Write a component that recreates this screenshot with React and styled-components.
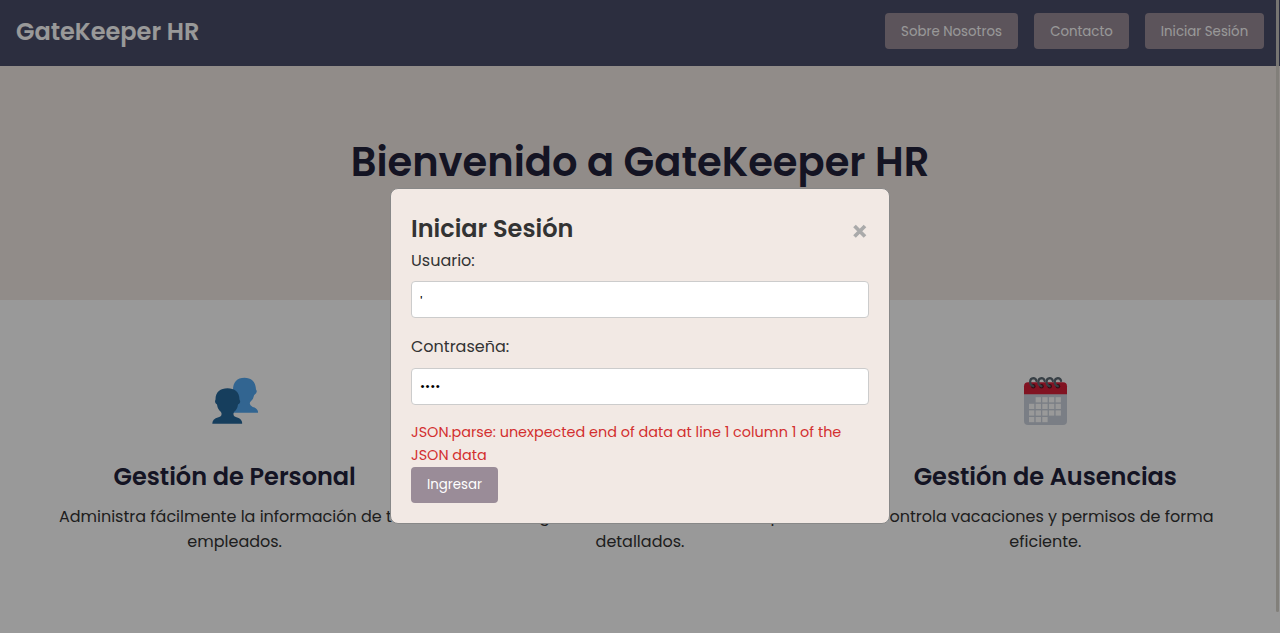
import React from "react";
import styled, { createGlobalStyle } from "styled-components";

const GlobalStyle = createGlobalStyle`
  * { box-sizing: border-box; margin: 0; padding: 0; }
  body {
    font-family: Poppins, Inter, "Open Sans", sans-serif;
    font-size: 16px;
    line-height: 1.6;
    color: #333;
    background: #fff;
    height: 633px;
    overflow: hidden;
  }
`;

const Header = styled.header`
  display: flex;
  justify-content: space-between;
  align-items: flex-start;
  height: 66px;
  padding: 13px 16px 0;
  background: #4a4e69;
  color: #fff;
`;

const Logo = styled.div`
  font-size: 24px;
  font-weight: 600;
  line-height: 38px;
`;

const Nav = styled.nav`
  display: flex;
  gap: 16px;
`;

const Button = styled.button`
  width: ${(p) => p.$width}px;
  height: 36px;
  padding-top: 1px;
  border: 0;
  border-radius: 4px;
  background: #9a8c98;
  color: #fff;
  font-family: inherit;
  font-size: 13.333px;
  white-space: nowrap;
`;

const SubmitButton = styled(Button)`
  padding: 0 0 1px;
`;

const Hero = styled.section`
  height: 234px;
  padding-top: 64px;
  background: #f2e9e4;
  text-align: center;
`;

const HeroTitle = styled.h1`
  font-size: 40px;
  font-weight: 600;
  color: #22223b;
`;

const Features = styled.section`
  display: grid;
  grid-template-columns: repeat(3, 1fr);
  padding: 64px 32px;
`;

const Feature = styled.article`
  display: flex;
  flex-direction: column;
  align-items: center;
  text-align: center;
`;

const FeatureIcon = styled.svg`
  width: 52px;
  height: 52px;
  margin: 11px 0 31px;
`;

const FeatureTitle = styled.h3`
  font-size: 24px;
  font-weight: 600;
  line-height: 38px;
  color: #22223b;
  margin-bottom: 8px;
`;

const FeatureLine = styled.span`
  display: block;
  line-height: 25px;
  white-space: nowrap;
  letter-spacing: ${(p) => p.$track || 0}px;
`;

const Overlay = styled.div`
  position: fixed;
  inset: 0;
  display: flex;
  justify-content: center;
  align-items: flex-start;
  padding-top: 188px;
  background: rgba(0, 0, 0, 0.4);
`;

const Dialog = styled.div`
  width: 500px;
  height: 336px;
  padding: 20px;
  border: 1px solid #888;
  border-radius: 8px;
  background: #f2e9e4;
`;

const DialogHead = styled.div`
  display: flex;
  justify-content: space-between;
  align-items: center;
  height: 39px;
`;

const DialogTitle = styled.h2`
  font-size: 24px;
  font-weight: 600;
  line-height: 39px;
`;

const Close = styled.svg`
  width: 14px;
  height: 14px;
  margin: 4px 2px 0 0;
`;

const Label = styled.label`
  display: block;
  height: 25px;
  line-height: 25px;
  margin-bottom: 8px;
`;

const Input = styled.input`
  display: block;
  width: 100%;
  height: 37px;
  margin-bottom: 16px;
  padding: 2px 8px 0;
  border: 1px solid #ccc;
  border-radius: 4px;
  background: #fff;
  color: #000;
  font-family: "Liberation Sans", sans-serif;
  font-size: 13.333px;
`;

const PasswordInput = styled(Input)`
  margin-top: 9px;
  padding-top: 1px;
  font-family: inherit;
  font-size: 12.3px;
`;

const ErrorLine = styled.span`
  display: block;
  font-size: 14.4px;
  line-height: 23px;
  color: #d32f2f;
  white-space: nowrap;
`;

const ScrollThumb = styled.div`
  position: fixed;
  top: 0;
  right: 1px;
  width: 3px;
  height: 612px;
  background: rgba(127, 125, 120, 0.9);
  border-radius: 0 0 2px 2px;
`;

function PeopleIcon() {
  return (
    <FeatureIcon viewBox="0 0 52 52">
      <path fill="#54a9f2" d="M24 37.700 L49 37.700 Q49.500 33.500 43.700 32 Q39.700 30 41.200 27 Q44.700 24 45.200 20 Q49.200 17.500 47 14.500 C46.500 6 42 2.700 35.500 2.700 C28 2.700 24 7 24 15 Z" />
      <path fill="#26689c" d="M3.300 48.800 Q3 44 9.500 42.200 Q14 41 12 37 Q8.500 34 8 29.500 Q5 27.500 6.500 24.500 C6.500 17 11.500 13.300 18.500 13.300 C25.500 13.300 30.500 17 30.500 24.500 Q32.500 27.500 29 29.500 Q28.500 34 25 37 Q23 41 27.500 42.200 Q33.600 44 33.200 48.800 Z" />
    </FeatureIcon>
  );
}

function ChartIcon() {
  return (
    <FeatureIcon viewBox="0 0 52 52">
      <path fill="#fafafa" d="M4 4h44v44H4z" />
      <path fill="#00bfa5" d="M10 22h8v22h-8z" />
      <path fill="#f44336" d="M22 10h8v34h-8z" />
      <path fill="#0288d1" d="M34 28h8v16h-8z" />
    </FeatureIcon>
  );
}

function isBlankDay(row, col) {
  return (row === 0 && col === 0) || (row === 3 && col > 2);
}

function CalendarIcon() {
  return (
    <FeatureIcon viewBox="0 0 52 52">
      <path fill="#ccd3de" d="M5 17h43v29q0 4-4 4h-35q-4 0-4-4z" />
      <path fill="#d8203a" d="M5 19.300v-8q0-4 4-4h35q4 0 4 4v8z" />
      {[0, 1, 2, 3].map((row) =>
        [0, 1, 2, 3, 4].map((col) =>
          isBlankDay(row, col) ? null : (
            <rect key={`${row}-${col}`} x={10 + col * 6.650} y={22.200 + row * 6.600} width="5.300" height="5.200" fill="#fff" />
          )
        )
      )}
      {[14.300, 22.500, 30.700, 38.900].map((x) => (
        <g key={x}>
          <circle cx={x} cy="11.300" r="2.300" fill="#5a1520" />
          <path
            fill="none"
            stroke="#5c6a74"
            strokeWidth="2.200"
            strokeLinecap="round"
            d={`M${x} 11.300 C${x - 4.500} 10 ${x - 4} 3.500 ${x} 3.200 Q${x + 2.500} 3.200 ${x + 3.200} 6`}
          />
        </g>
      ))}
    </FeatureIcon>
  );
}

export default function App() {
  return (
    <>
      <GlobalStyle />
      <Header>
        <Logo>GateKeeper HR</Logo>
        <Nav>
          <Button $width={133}>Sobre Nosotros</Button>
          <Button $width={95}>Contacto</Button>
          <Button $width={119}>Iniciar Sesión</Button>
        </Nav>
      </Header>
      <Hero>
        <HeroTitle>Bienvenido a GateKeeper HR</HeroTitle>
      </Hero>
      <Features>
        <Feature>
          <PeopleIcon />
          <FeatureTitle>Gestión de Personal</FeatureTitle>
          <p>
            <FeatureLine>Administra fácilmente la información de tus</FeatureLine>
            <FeatureLine>empleados.</FeatureLine>
          </p>
        </Feature>
        <Feature>
          <ChartIcon />
          <FeatureTitle>Control de Asistencia</FeatureTitle>
          <p>
            <FeatureLine $track={0.42}>Lleva el registro de asistencias con reportes</FeatureLine>
            <FeatureLine>detallados.</FeatureLine>
          </p>
        </Feature>
        <Feature>
          <CalendarIcon />
          <FeatureTitle>Gestión de Ausencias</FeatureTitle>
          <p>
            <FeatureLine>Controla vacaciones y permisos de forma</FeatureLine>
            <FeatureLine>eficiente.</FeatureLine>
          </p>
        </Feature>
      </Features>
      <Overlay>
        <Dialog>
          <DialogHead>
            <DialogTitle>Iniciar Sesión</DialogTitle>
            <Close viewBox="0 0 14 14">
              <path d="M1.500 2L12 12.500M12 2L1.500 12.500" stroke="#aaa" strokeWidth="3.700" />
            </Close>
          </DialogHead>
          <Label>Usuario:</Label>
          <Input type="text" defaultValue="'" />
          <Label>Contraseña:</Label>
          <PasswordInput type="password" defaultValue="abcd" />
          <ErrorLine>JSON.parse: unexpected end of data at line 1 column 1 of the</ErrorLine>
          <ErrorLine>JSON data</ErrorLine>
          <SubmitButton $width={87}>Ingresar</SubmitButton>
        </Dialog>
      </Overlay>
      <ScrollThumb />
    </>
  );
}
